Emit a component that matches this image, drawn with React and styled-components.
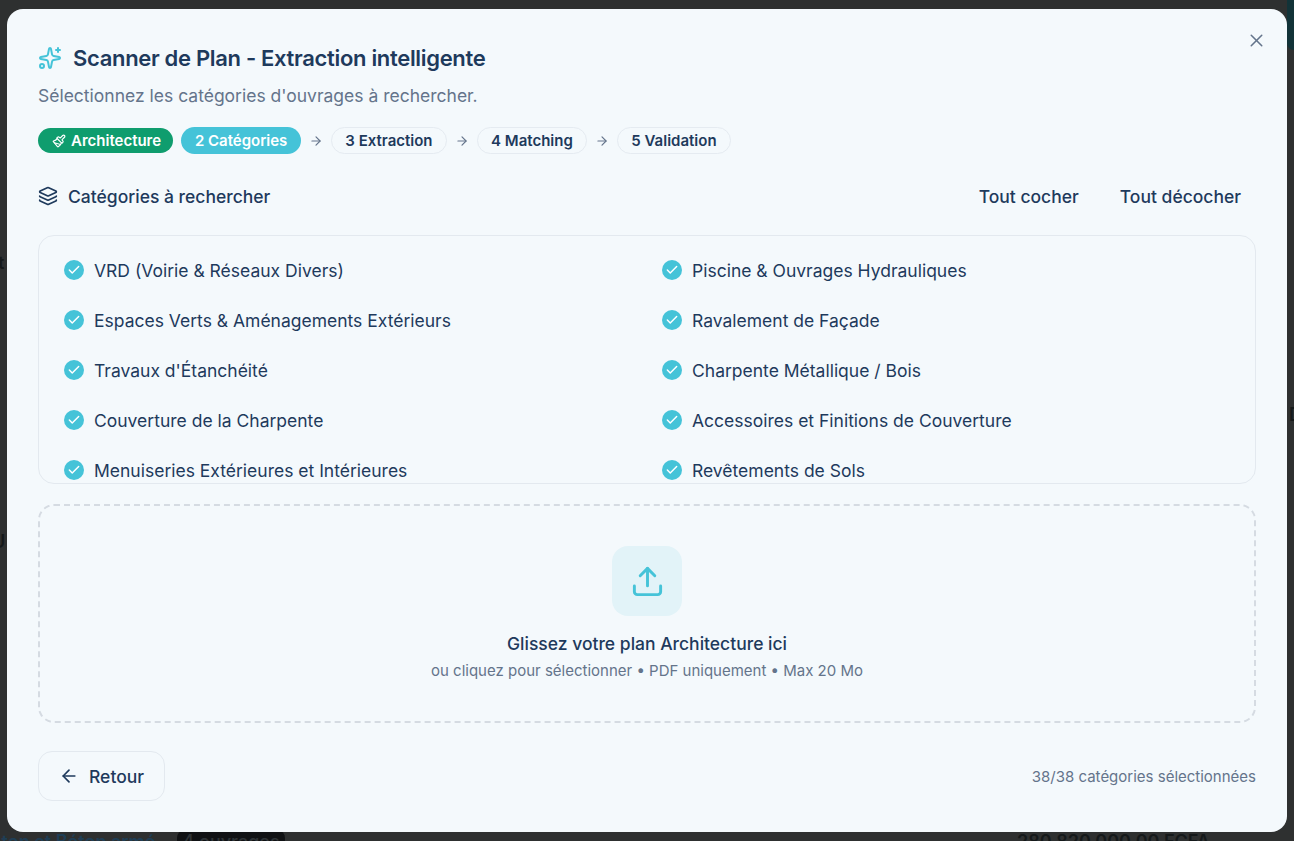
import styled, { createGlobalStyle } from "styled-components";
import { ArrowLeft, ArrowRight, Check, Layers, Paintbrush, Sparkles, Upload, X } from "lucide-react";

const CATEGORIES = [
  "VRD (Voirie & Réseaux Divers)",
  "Piscine & Ouvrages Hydrauliques",
  "Espaces Verts & Aménagements Extérieurs",
  "Ravalement de Façade",
  "Travaux d'Étanchéité",
  "Charpente Métallique / Bois",
  "Couverture de la Charpente",
  "Accessoires et Finitions de Couverture",
  "Menuiseries Extérieures et Intérieures",
  "Revêtements de Sols",
];

const STEPS = ["3 Extraction", "4 Matching", "5 Validation"];

const PILL_PADDING = {
  done: "0 12px 0 14px",
  active: "0 13.75px",
  todo: "0 13.25px",
};

const GlobalStyle = createGlobalStyle`
  html, body {
    margin: 0;
    height: 100%;
    background: #2e3030;
    overflow: hidden;
  }
  * {
    box-sizing: border-box;
  }
`;

const Page = styled.div`
  position: relative;
  width: 1294px;
  height: 841px;
  padding: 9px 7px;
  overflow: hidden;
  font-family: Inter, "Liberation Sans", sans-serif;
  color: #1e3a5c;
`;

/* dimmed page behind the dialog, only its edges show */
const BehindText = styled.span`
  position: absolute;
  left: ${(p) => p.$left}px;
  top: ${(p) => p.$top}px;
  font-size: 18px;
  font-weight: 600;
  line-height: 22px;
  white-space: nowrap;
  color: ${(p) => p.$color || "#15191a"};
`;

const BehindBadge = styled.span`
  position: absolute;
  left: 177px;
  top: 830px;
  width: 108px;
  height: 24px;
  border-radius: 8px;
  background: #101214;
  color: #2e3336;
  font-size: 18px;
  font-weight: 500;
  line-height: 24px;
  text-align: center;
`;

const BehindBlob = styled.div`
  position: absolute;
  top: 0;
  right: 0;
  width: 7px;
  height: 50px;
  border-bottom-left-radius: 8px;
  background: #123338;
`;

const Dialog = styled.div`
  position: relative;
  width: 1280px;
  height: 823px;
  padding: 31px;
  background: #f4f9fc;
  border-radius: 16px;
  display: flex;
  flex-direction: column;
`;

const CloseButton = styled.button`
  position: absolute;
  top: 21px;
  right: 20px;
  width: 21px;
  height: 21px;
  padding: 0;
  border: 0;
  background: none;
  color: #64748b;
  display: flex;
  align-items: center;
  justify-content: center;
`;

const Title = styled.h2`
  margin: 0;
  height: 36px;
  display: flex;
  align-items: center;
  gap: 11px;
  font-size: 22px;
  font-weight: 600;
  letter-spacing: -0.32px;
  color: #1e3a5c;
  svg {
    color: #45c3d8;
  }
`;

const Subtitle = styled.p`
  margin: 8px 0 0;
  font-size: 17.5px;
  line-height: 24px;
  color: #64748b;
`;

const Steps = styled.div`
  margin-top: 19px;
  height: 27px;
  display: flex;
  align-items: center;
  gap: 8px;
`;

const Pill = styled.span`
  display: inline-flex;
  align-items: center;
  gap: 5px;
  height: ${(p) => (p.$variant === "done" ? "25px" : "27px")};
  padding: ${(p) => PILL_PADDING[p.$variant]};
  border-radius: 999px;
  font-size: 15px;
  font-weight: 600;
  color: ${(p) => (p.$variant === "todo" ? "#1e3a5c" : "#fff")};
  background: ${(p) =>
    p.$variant === "done" ? "#0f9d6e" : p.$variant === "active" ? "#45c3d8" : "transparent"};
  border: ${(p) => (p.$variant === "todo" ? "1px solid #e5ebf1" : "0")};
`;

const StepArrow = styled(ArrowRight)`
  color: #64748b;
`;

const SectionHead = styled.div`
  margin-top: 22px;
  height: 40px;
  display: flex;
  align-items: center;
  justify-content: space-between;
`;

const SectionLabel = styled.div`
  display: flex;
  align-items: center;
  gap: 10px;
  font-size: 17.5px;
  font-weight: 500;
`;

const SectionActions = styled.div`
  display: flex;
  gap: 14px;
`;

const GhostButton = styled.button`
  height: 40px;
  padding: 0 15px 0 12px;
  border: 0;
  background: none;
  font: 500 17.5px Inter, "Liberation Sans", sans-serif;
  color: #1e3a5c;
`;

const CategoryPanel = styled.div`
  margin-top: 19px;
  height: 249px;
  padding: 9px 25px 0;
  border: 1px solid #e3e9ef;
  border-radius: 16px;
  overflow: hidden;
  display: grid;
  grid-template-columns: 1fr 1fr;
  grid-auto-rows: 50px;
  column-gap: 30px;
`;

const CategoryRow = styled.label`
  display: flex;
  align-items: center;
  gap: 10px;
  font-size: 17.5px;
  color: #1e3a5c;
`;

const CheckDot = styled.span`
  width: 20px;
  height: 20px;
  flex: none;
  border-radius: 50%;
  background: #45c3d8;
  color: #fff;
  display: flex;
  align-items: center;
  justify-content: center;
`;

const DropZone = styled.div`
  margin-top: 20px;
  height: 219px;
  border: 2px dashed #d5dbe2;
  border-radius: 16px;
  display: flex;
  flex-direction: column;
  align-items: center;
  padding-top: 40px;
`;

const UploadTile = styled.div`
  width: 70px;
  height: 70px;
  border-radius: 16px;
  background: #e2f3f8;
  color: #45c3d8;
  display: flex;
  align-items: center;
  justify-content: center;
`;

const DropTitle = styled.div`
  margin-top: 16px;
  font-size: 17.5px;
  line-height: 24px;
  font-weight: 500;
`;

const DropHint = styled.div`
  margin-top: 5px;
  font-size: 15px;
  line-height: 20px;
  color: #64748b;
`;

const Footer = styled.div`
  margin-top: 28px;
  display: flex;
  align-items: center;
  justify-content: space-between;
`;

const BackButton = styled.button`
  height: 50px;
  padding: 0 20px;
  display: flex;
  align-items: center;
  gap: 10px;
  background: transparent;
  border: 1px solid #e3e9ef;
  border-radius: 14px;
  font: 500 17.5px Inter, "Liberation Sans", sans-serif;
  color: #1e3a5c;
`;

const Count = styled.span`
  font-size: 15px;
  color: #64748b;
`;

function StepGroup({ label }) {
  return (
    <>
      <StepArrow size={14} strokeWidth={2} />
      <Pill $variant="todo">{label}</Pill>
    </>
  );
}

export default function App() {
  return (
    <Page>
      <GlobalStyle />
      <BehindBlob />
      <BehindText $left={-2} $top={252}>
        t
      </BehindText>
      <BehindText $left={-8} $top={531}>
        U
      </BehindText>
      <BehindText $left={1289} $top={404}>
        D
      </BehindText>
      <BehindText $left={-21} $top={831} $color="#1f3e55">
        Béton et Béton armé
      </BehindText>
      <BehindBadge>4 ouvrages</BehindBadge>
      <BehindText $left={1017} $top={831}>
        280 820 000,00 FCFA
      </BehindText>
      <Dialog>
        <CloseButton aria-label="Fermer">
          <X size={21} strokeWidth={1.75} />
        </CloseButton>
        <Title>
          <Sparkles size={24} strokeWidth={2} />
          Scanner de Plan - Extraction intelligente
        </Title>
        <Subtitle>Sélectionnez les catégories d'ouvrages à rechercher.</Subtitle>
        <Steps>
          <Pill $variant="done">
            <Paintbrush size={14} strokeWidth={2} />
            Architecture
          </Pill>
          <Pill $variant="active">2 Catégories</Pill>
          {STEPS.map((step) => (
            <StepGroup key={step} label={step} />
          ))}
        </Steps>
        <SectionHead>
          <SectionLabel>
            <Layers size={20} strokeWidth={2} />
            Catégories à rechercher
          </SectionLabel>
          <SectionActions>
            <GhostButton>Tout cocher</GhostButton>
            <GhostButton>Tout décocher</GhostButton>
          </SectionActions>
        </SectionHead>
        <CategoryPanel>
          {CATEGORIES.map((name) => (
            <CategoryRow key={name}>
              <CheckDot>
                <Check size={14} strokeWidth={2.5} />
              </CheckDot>
              {name}
            </CategoryRow>
          ))}
        </CategoryPanel>
        <DropZone>
          <UploadTile>
            <Upload size={35} strokeWidth={2} />
          </UploadTile>
          <DropTitle>Glissez votre plan Architecture ici</DropTitle>
          <DropHint>ou cliquez pour sélectionner • PDF uniquement • Max 20 Mo</DropHint>
        </DropZone>
        <Footer>
          <BackButton>
            <ArrowLeft size={20} strokeWidth={2} />
            Retour
          </BackButton>
          <Count>38/38 catégories sélectionnées</Count>
        </Footer>
      </Dialog>
    </Page>
  );
}
